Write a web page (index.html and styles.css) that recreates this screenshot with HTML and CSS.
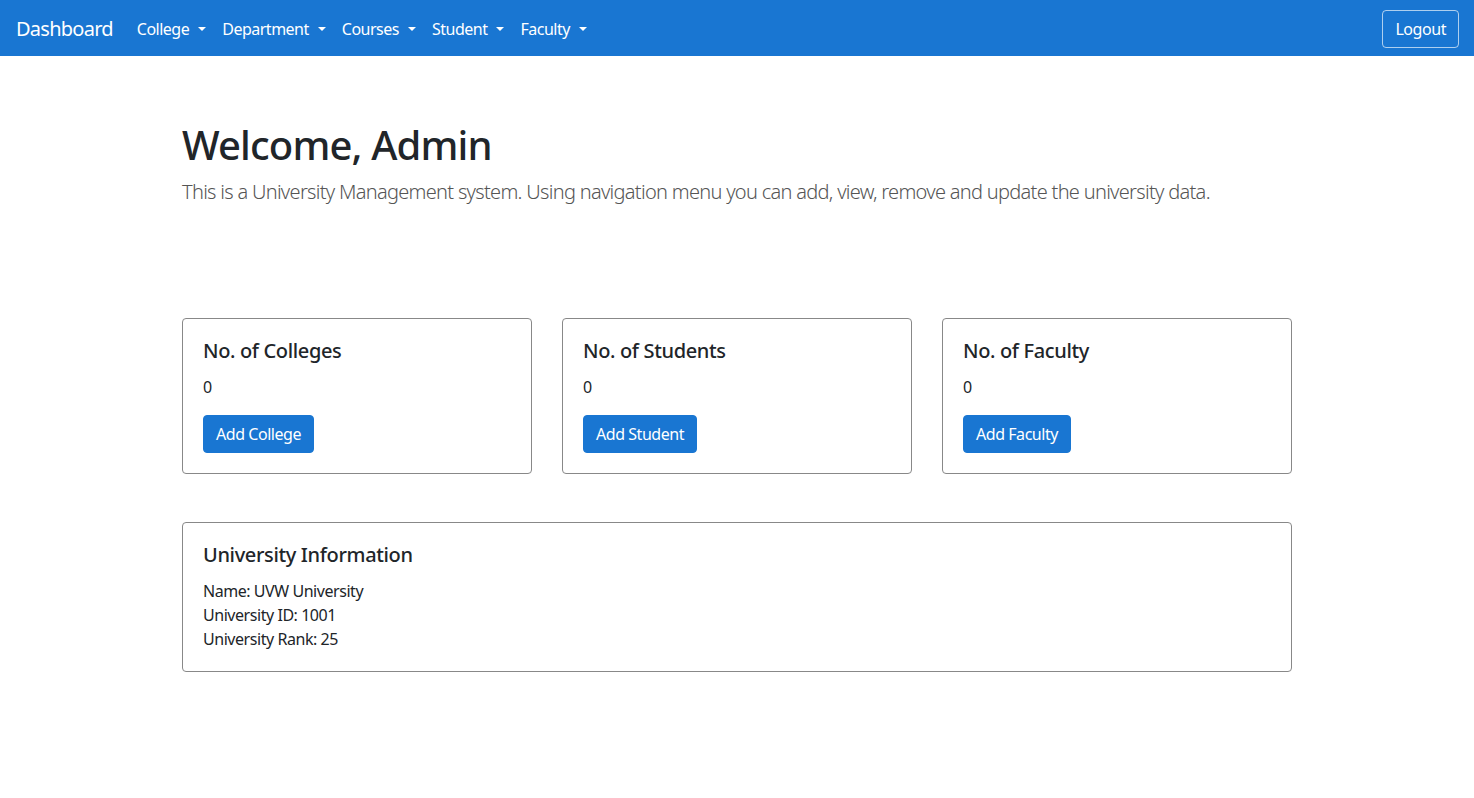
FILE: index.html
```html
<!DOCTYPE html>
<html lang="en">
<head>
<meta charset="utf-8">
<title>Dashboard</title>
<link rel="stylesheet" href="styles.css">
</head>
<body>
<nav class="navbar">
  <a class="brand" href="#">Dashboard</a>
  <ul class="nav">
    <li><a class="nav-link toggle" href="#">College</a></li>
    <li><a class="nav-link toggle" href="#">Department</a></li>
    <li><a class="nav-link toggle" href="#">Courses</a></li>
    <li><a class="nav-link toggle" href="#">Student</a></li>
    <li><a class="nav-link toggle" href="#">Faculty</a></li>
  </ul>
  <button class="btn-logout">Logout</button>
</nav>
<main class="container">
  <section class="intro">
    <h1 class="title">Welcome, Admin</h1>
    <p class="lead">This is a University Management system. Using navigation menu you can add, view, remove and update the university data.</p>
  </section>
  <section class="stats">
    <div class="card">
      <h5 class="card-title">No. of Colleges</h5>
      <p class="card-text">0</p>
      <button class="btn-primary">Add College</button>
    </div>
    <div class="card">
      <h5 class="card-title">No. of Students</h5>
      <p class="card-text">0</p>
      <button class="btn-primary">Add Student</button>
    </div>
    <div class="card">
      <h5 class="card-title">No. of Faculty</h5>
      <p class="card-text">0</p>
      <button class="btn-primary">Add Faculty</button>
    </div>
  </section>
  <section class="card info">
    <h5 class="card-title">University Information</h5>
    <p class="info-text">Name: UVW University<br>University ID: 1001<br>University Rank: 25</p>
  </section>
</main>
</body>
</html>
```
FILE: styles.css
```css
* { box-sizing: border-box; }
body {
  margin: 0;
  font-family: "Noto Sans", "Open Sans", "Liberation Sans", sans-serif;
  font-size: 16px;
  line-height: 1.5;
  letter-spacing: -0.45px;
  color: #212529;
  background: #fff;
}
.navbar {
  display: flex;
  align-items: center;
  height: 56px;
  padding: 9px 15px 7px 16px;
  background: #1976d2;
}
.brand {
  color: #fff;
  text-decoration: none;
  font-size: 20px;
  line-height: 30px;
  letter-spacing: -0.75px;
  margin-right: 16px;
}
.nav {
  display: flex;
  list-style: none;
  margin: 0;
  padding: 0;
  flex: 1;
}
.nav-link {
  display: block;
  padding: 8px;
  color: #fff;
  text-decoration: none;
  line-height: 24px;
  letter-spacing: -0.5px;
}
.toggle::after {
  content: "";
  display: inline-block;
  margin-left: 9px;
  vertical-align: 0.255em;
  border-top: 0.3em solid;
  border-right: 0.3em solid transparent;
  border-left: 0.3em solid transparent;
}
.btn-logout {
  font: inherit;
  letter-spacing: -0.45px;
  color: #fff;
  background: transparent;
  border: 1px solid rgba(255,255,255,0.65);
  border-radius: 4px;
  padding: 6px 12px;
  line-height: 24px;
}
.container {
  width: 1140px;
  margin: 0 auto;
  padding: 0 15px;
}
.intro {
  padding-top: 65px;
}
.title {
  margin: 0 0 8px;
  font-size: 40px;
  line-height: 48px;
  font-weight: 500;
  letter-spacing: -0.85px;
}
.lead {
  margin: 0;
  font-size: 20px;
  line-height: 30px;
  font-weight: 300;
  letter-spacing: -0.7px;
  color: #555;
}
.stats {
  display: grid;
  grid-template-columns: repeat(3, 1fr);
  gap: 30px;
  margin-top: 111px;
}
.card {
  border: 1px solid #888;
  border-radius: 4px;
  padding: 20px;
}
.card-title {
  margin: 0 0 12px;
  font-size: 20px;
  line-height: 24px;
  font-weight: 500;
  letter-spacing: -0.35px;
}
.card-text {
  margin: 0 0 16px;
}
.btn-primary {
  font: inherit;
  letter-spacing: -0.45px;
  color: #fff;
  background: #1976d2;
  border: 1px solid #1976d2;
  border-radius: 4px;
  padding: 6px 12px;
  line-height: 24px;
}
.info {
  margin-top: 48px;
}
.info-text {
  margin: 0;
}
```
